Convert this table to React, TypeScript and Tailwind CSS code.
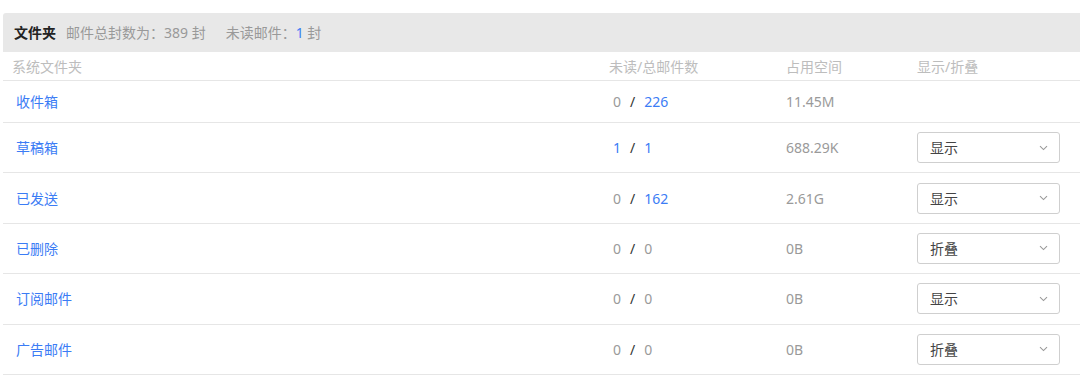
import React from 'react';

type Folder = {
  name: string;
  unread: number;
  total: number;
  size: string;
  mode?: '显示' | '折叠';
};

const folders: Folder[] = [
  { name: '收件箱', unread: 0, total: 226, size: '11.45M' },
  { name: '草稿箱', unread: 1, total: 1, size: '688.29K', mode: '显示' },
  { name: '已发送', unread: 0, total: 162, size: '2.61G', mode: '显示' },
  { name: '已删除', unread: 0, total: 0, size: '0B', mode: '折叠' },
  { name: '订阅邮件', unread: 0, total: 0, size: '0B', mode: '显示' },
  { name: '广告邮件', unread: 0, total: 0, size: '0B', mode: '折叠' },
];

const Chevron: React.FC = () => (
  <svg width="9" height="6" viewBox="0 0 9 6" fill="none">
    <path d="M1 1.2 4.5 4.6 8 1.2" stroke="#9a9a9a" strokeWidth="1.1" />
  </svg>
);

const Count: React.FC<{ n: number }> = ({ n }) => (
  <span className={n > 0 ? 'text-[#3b7cf5]' : 'text-[#9a9a9a]'}>{n}</span>
);

const App: React.FC = () => {
  return (
    <div
      className="w-[1080px] h-[375px] bg-white pt-[13px] pl-[3px] text-[14px] overflow-hidden"
      style={{ fontFamily: '"Noto Sans", "Noto Sans CJK SC", sans-serif' }}
    >
      <div className="h-[39px] bg-[#e8e8e8] rounded-tl-[3px] flex items-center pl-[11px]">
        <span className="font-bold text-[#222]">文件夹</span>
        <span className="ml-[10px] text-[#999]">邮件总封数为：389 封</span>
        <span className="ml-[20px] text-[#999]">
          未读邮件：<span className="text-[#3b7cf5]">1</span> 封
        </span>
      </div>

      <div className="grid grid-cols-[606px_177px_131px_1fr] h-[29px] items-center border-b border-[#e6e6e6] text-[#bdbdbd]">
        <div className="pl-[9px]">系统文件夹</div>
        <div>未读/总邮件数</div>
        <div>占用空间</div>
        <div>显示/折叠</div>
      </div>

      {folders.map((f, i) => (
        <div
          key={f.name}
          className={`grid grid-cols-[606px_177px_131px_1fr] items-center border-b border-[#e6e6e6] ${
            i === 0 ? 'h-[42px]' : 'h-[50.4px]'
          }`}
        >
          <div className="pl-[13px] text-[#3b7cf5]">{f.name}</div>
          <div className="pl-[4px] flex items-center">
            <Count n={f.unread} />
            <span className="mx-[9px] text-[#333]">/</span>
            <Count n={f.total} />
          </div>
          <div className="text-[#9a9a9a]">{f.size}</div>
          <div>
            {f.mode && (
              <div className="w-[143px] h-[31px] border border-[#cfcfcf] rounded-[3px] flex items-center justify-between pl-[12px] pr-[11px] text-[#444]">
                <span>{f.mode}</span>
                <Chevron />
              </div>
            )}
          </div>
        </div>
      ))}
    </div>
  );
};

export default App;
